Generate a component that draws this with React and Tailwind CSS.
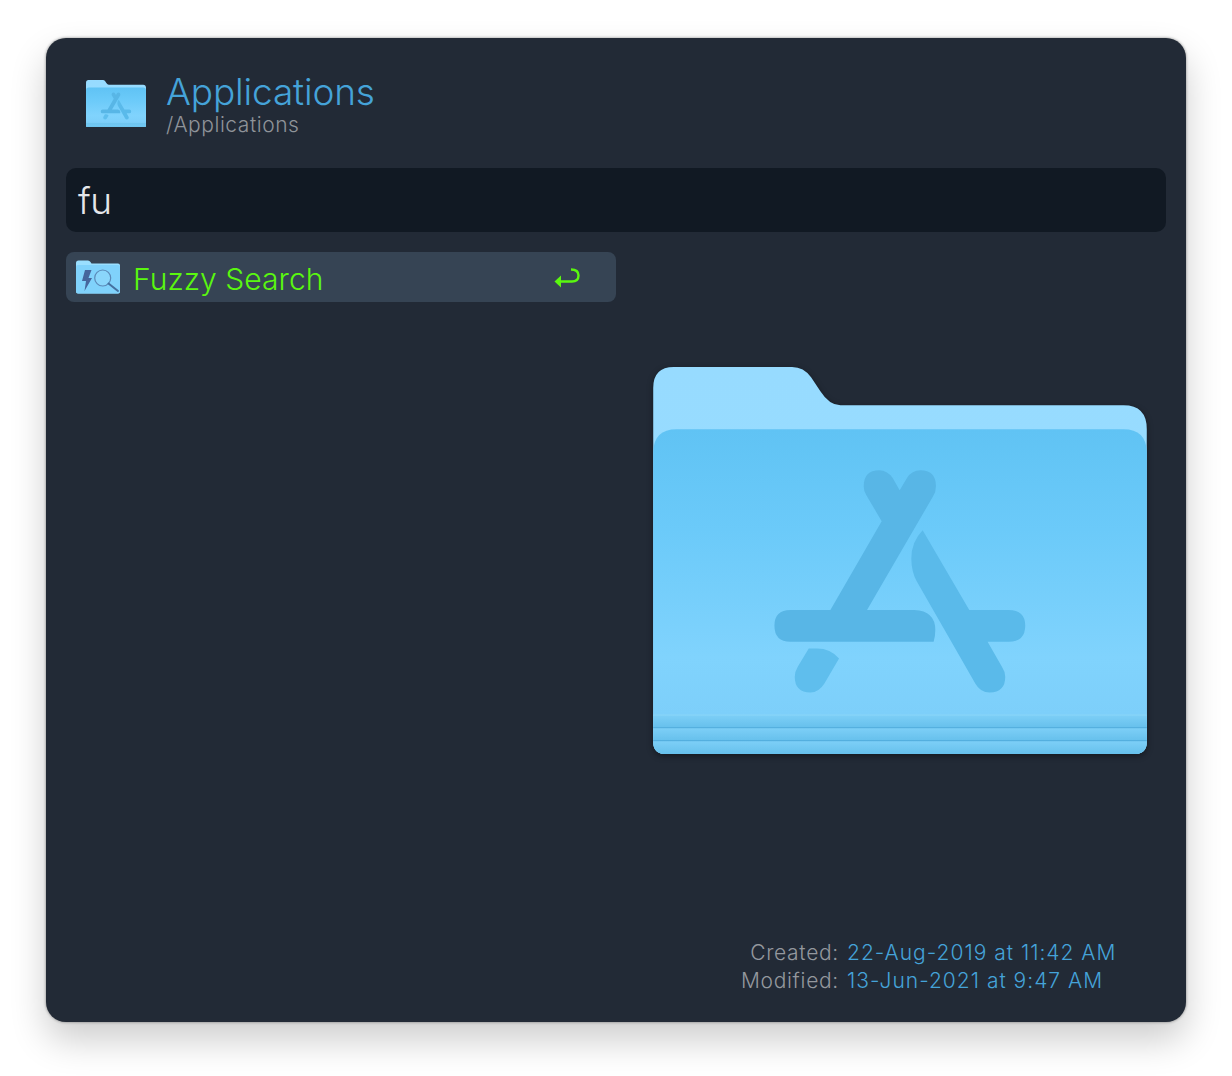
import { useId } from 'react'

const font = { sf: 'font-["Inter","Liberation_Sans",sans-serif]' }

// folder drawn in the coordinates of the big icon, so it scales down for the header one
function AppFolder({ className }) {
  const id = useId()
  const back = `${id}-back`
  const front = `${id}-front`
  const band = `${id}-band`
  return (
    <svg className={className} viewBox="38 35 1482 1162" fill="none">
      <defs>
        <linearGradient id={back} x1="0" y1="0" x2="0" y2="1">
          <stop offset="0" stopColor="#97dbff" />
          <stop offset="1" stopColor="#98deff" />
        </linearGradient>
        <linearGradient id={front} gradientUnits="userSpaceOnUse" x1="0" y1="222" x2="0" y2="1080">
          <stop offset="0" stopColor="#60c3f4" />
          <stop offset="0.35" stopColor="#6bcaf9" />
          <stop offset="0.8" stopColor="#80d3fd" />
          <stop offset="1" stopColor="#7dcffa" />
        </linearGradient>
        <linearGradient id={band} x1="0" y1="0" x2="0" y2="1">
          <stop offset="0" stopColor="#7dcff7" />
          <stop offset="1" stopColor="#66c0ec" />
        </linearGradient>
      </defs>
      <path
        d="M38 98 Q38 35 100 35 H455 Q490 35 512 66 L540 108 Q567 150 600 150 H1450 Q1520 150 1520 222 V1160 Q1520 1197 1483 1197 H75 Q38 1197 38 1160 Z"
        fill={`url(#${back})`}
      />
      <path
        d="M38 290 Q40 222 108 222 H1450 Q1518 222 1520 290 V1160 Q1520 1197 1483 1197 H75 Q38 1197 38 1160 Z"
        fill={`url(#${front})`}
      />
      <path d="M38 1080 H1520 V1118 H38 Z" fill={`url(#${band})`} />
      <path d="M38 1119 H1520 V1157 H38 Z" fill={`url(#${band})`} />
      <path d="M38 1158 H1520 V1160 Q1520 1197 1483 1197 H75 Q38 1197 38 1160 Z" fill={`url(#${band})`} />
      <path d="M38 1080 H1520" stroke="#93daf9" strokeWidth="2" />
      <path d="M38 1118 H1520 M38 1157 H1520" stroke="#4fabdb" strokeWidth="3" />
      <path
        d="M778 405 L800 368 Q815 345 840 345 Q887 345 887 393 Q887 410 878 424 L680 765 H822 Q885 768 885 825 Q885 845 880 860 H450 Q402 860 402 812 Q402 765 450 765 H570 L724 498 L678 420 Q670 408 670 393 Q670 345 717 345 Q740 345 757 368 Z"
        fill="#58b6e6"
      />
      <path
        d="M847 525 L987 765 H1105 Q1155 765 1155 812 Q1155 860 1105 860 H1042 L1085 935 Q1095 950 1095 965 Q1095 1012 1048 1012 Q1020 1012 1005 985 L830 680 Q813 650 813 610 Q813 560 847 525 Z"
        fill="#5abaea"
      />
      <path
        d="M505 880 H530 Q570 880 596 910 L552 985 Q535 1012 510 1012 Q463 1012 463 965 Q463 950 472 935 Z"
        fill="#5fbeed"
      />
    </svg>
  )
}

function FuzzyIcon({ className }) {
  return (
    <svg className={className} viewBox="0 0 44 34" fill="none">
      <path d="M0 3 Q0 0.5 2.5 0.5 H12 Q13.5 0.5 14.5 2 L15.5 3.5 H42 Q44 3.5 44 5.5 V31.5 Q44 33.5 42 33.5 H2 Q0 33.5 0 31.5 Z" fill="#9adfff" />
      <path d="M0 6.5 Q0 5 2 5 H42 Q44 5 44 6.5 V31.5 Q44 33.5 42 33.5 H2 Q0 33.5 0 31.5 Z" fill="#80d2fb" />
      <path d="M9 10 H15.5 L12.5 18 H16 L8.5 31 L10 21 H6 Z" fill="#46659c" />
      <circle cx="26.7" cy="18" r="8" stroke="#5b8ab8" strokeWidth="1.2" fill="#8ad6fb" />
      <path d="M32.5 23.5 L42 31" stroke="#44709f" strokeWidth="2" strokeLinecap="round" />
    </svg>
  )
}

function ReturnIcon({ className }) {
  return (
    <svg className={className} viewBox="0 0 26 21" fill="none">
      <path d="M17 1.5 Q24.5 1.5 24.5 7.5 Q24.5 13.5 18 13.5 H6" stroke="#5af70f" strokeWidth="2.4" />
      <path d="M0.5 13.5 L7 7.5 V19.5 Z" fill="#5af70f" />
    </svg>
  )
}

export default function App() {
  return (
    <div className={`${font.sf} w-[1232px] h-[1076px] bg-white pt-[38px] pl-[46px]`}>
      <div className="w-[1140px] h-[984px] rounded-[20px] bg-[#222a36] p-5 flex flex-col shadow-[0_18px_36px_rgba(0,0,0,0.2),0_0_3px_rgba(0,0,0,0.45)]">
        <div className="flex items-center h-[110px] pl-5 pb-[18px]">
          <AppFolder className="w-[60px] h-[47px] -mt-[1px]" />
          <div className="ml-5">
            <div className="text-[37px] leading-[41px] mb-[1px] font-light text-[#45a3d9] tracking-[-0.15px]">Applications</div>
            <div className="text-[21px] leading-[24px] text-[#8f9399] font-light tracking-[0.55px]">/Applications</div>
          </div>
        </div>

        <div className="h-16 rounded-[10px] bg-[#111923] flex items-center px-3 pt-[2px] text-[37px] font-light text-[#e4e6ea] tracking-[-0.5px]">fu</div>

        <div className="flex flex-1 mt-5 min-h-0">
          <div className="w-[550px]">
            <div className="h-[50px] rounded-lg bg-[#364454] flex items-center pl-[10px] pr-[36px]">
              <FuzzyIcon className="w-11 h-[34px]" />
              <span className="ml-[13px] pt-[4px] flex-1 text-[30px] font-light text-[#5af70f] tracking-[0.05px]">Fuzzy Search</span>
              <ReturnIcon className="w-[26px] h-[21px] mt-[3px]" />
            </div>
          </div>

          <div className="flex-1 flex flex-col items-end">
            <div className="pt-[115px] pr-[19px]">
              <AppFolder className="w-[494px] h-[387px] drop-shadow-[0_2px_3px_rgba(0,0,0,0.4)]" />
            </div>
            <div className="mt-auto pr-[51px] pb-[7px] text-[21px] leading-[28px] font-light">
              <div className="flex justify-end">
                <span className="text-[#94989e] tracking-[0.7px]">Created:</span>
                <span className="ml-[8px] w-[268px] whitespace-nowrap text-[#45a3d9] tracking-[1px]">22-Aug-2019 at 11:42 AM</span>
              </div>
              <div className="flex justify-end">
                <span className="text-[#94989e] tracking-[0.7px]">Modified:</span>
                <span className="ml-[8px] w-[268px] whitespace-nowrap text-[#45a3d9] tracking-[1px]">13-Jun-2021 at 9:47 AM</span>
              </div>
            </div>
          </div>
        </div>
      </div>
    </div>
  )
}
